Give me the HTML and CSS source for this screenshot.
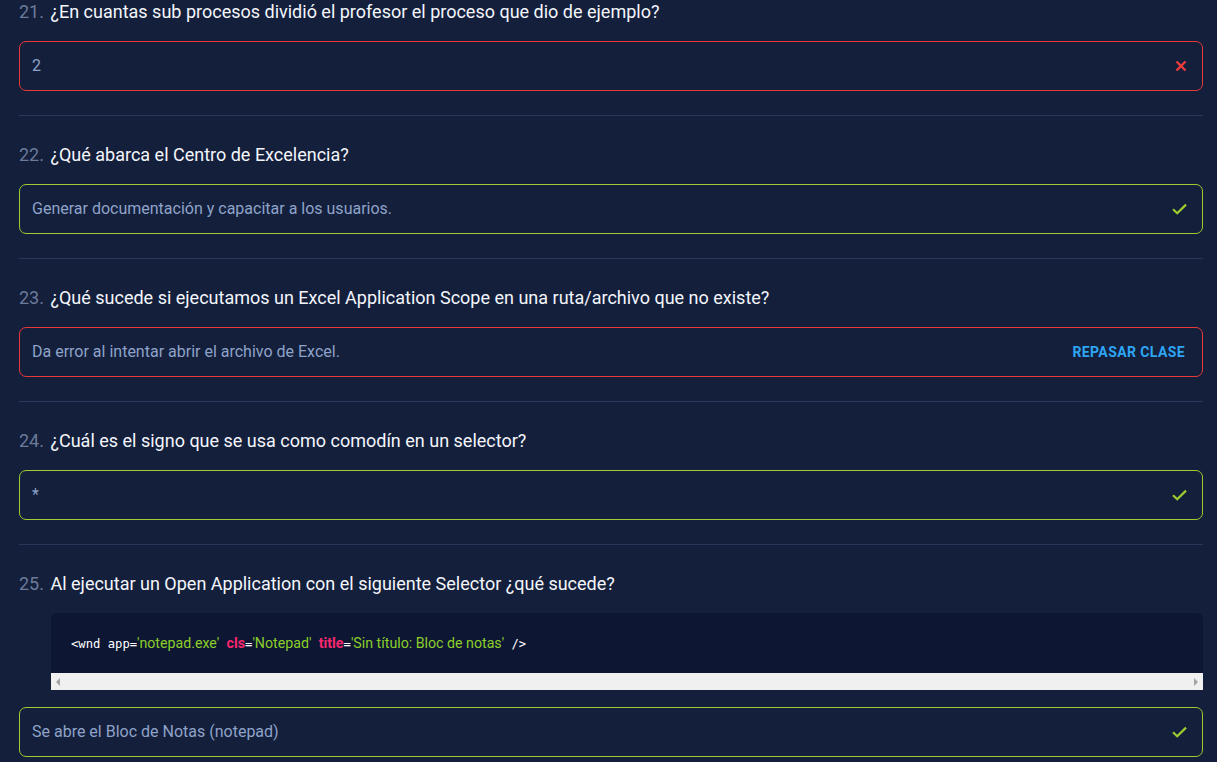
FILE: index.html
```html
<!DOCTYPE html>
<html lang="es">
<head>
<meta charset="utf-8">
<link rel="stylesheet" href="styles.css">
</head>
<body>
<main class="quiz">
  <section class="q">
    <h3 class="q-title"><span class="num">21.</span> ¿En cuantas sub procesos dividió el profesor el proceso que dio de ejemplo?</h3>
    <div class="answer wrong"><span class="txt">2</span>
      <svg class="ic x" width="12" height="12" viewBox="0 0 12 12"><path d="M1.5 1.5L10.5 10.5M10.5 1.5L1.5 10.5" stroke="#ef3b3b" stroke-width="2.4"/></svg>
    </div>
  </section>
  <section class="q">
    <h3 class="q-title"><span class="num">22.</span> ¿Qué abarca el Centro de Excelencia?</h3>
    <div class="answer right"><span class="txt">Generar documentación y capacitar a los usuarios.</span>
      <svg class="ic" width="15" height="12" viewBox="0 0 15 12"><path d="M1 6.2L5.2 10.3L14 1.6" fill="none" stroke="#9ccc2e" stroke-width="2.2"/></svg>
    </div>
  </section>
  <section class="q">
    <h3 class="q-title"><span class="num">23.</span> ¿Qué sucede si ejecutamos un Excel Application Scope en una ruta/archivo que no existe?</h3>
    <div class="answer wrong"><span class="txt">Da error al intentar abrir el archivo de Excel.</span>
      <span class="review">REPASAR CLASE</span>
    </div>
  </section>
  <section class="q">
    <h3 class="q-title"><span class="num">24.</span> ¿Cuál es el signo que se usa como comodín en un selector?</h3>
    <div class="answer right"><span class="txt">*</span>
      <svg class="ic" width="15" height="12" viewBox="0 0 15 12"><path d="M1 6.2L5.2 10.3L14 1.6" fill="none" stroke="#9ccc2e" stroke-width="2.2"/></svg>
    </div>
  </section>
  <section class="q last">
    <h3 class="q-title"><span class="num">25.</span> Al ejecutar un Open Application con el siguiente Selector ¿qué sucede?</h3>
    <div class="code">
      <div class="code-body"><code class="line"><span class="tag">&lt;wnd</span> <span class="attr">app</span>=<span class="str">'notepad.exe'</span> <span class="key">cls</span>=<span class="str">'Notepad'</span> <span class="key">title</span>=<span class="str">'Sin título: Bloc de notas'</span> <span class="tag">/&gt;</span></code></div>
      <div class="scrollbar"><span class="arr left"></span><span class="arr right"></span></div>
    </div>
    <div class="answer right"><span class="txt">Se abre el Bloc de Notas (notepad)</span>
      <svg class="ic" width="15" height="12" viewBox="0 0 15 12"><path d="M1 6.2L5.2 10.3L14 1.6" fill="none" stroke="#9ccc2e" stroke-width="2.2"/></svg>
    </div>
  </section>
</main>
</body>
</html>
```
FILE: styles.css
```css
* { box-sizing: border-box; }
html, body { margin: 0; padding: 0; }
body {
  background: #131f3b;
  font-family: Roboto, "Liberation Sans", Arial, sans-serif;
  overflow: hidden;
}
.quiz {
  padding: 0 14px 0 19px;
  margin-top: -1px;
}
.q {
  border-bottom: 1px solid #27375a;
  padding-bottom: 24px;
  margin-bottom: 26px;
}
.q.last { border-bottom: none; }
.q-title {
  margin: 0;
  font-weight: 400;
  font-size: 18px;
  line-height: 25px;
  color: #f4f6fb;
}
.num { color: #6c7b9a; margin-right: 2px; }
.answer {
  margin-top: 17px;
  height: 50px;
  border: 1px solid;
  border-radius: 7px;
  display: flex;
  align-items: center;
  justify-content: space-between;
  padding: 0 15px 0 12px;
  color: #8fa3c9;
  font-size: 16px;
}
.answer .txt { position: relative; top: -1px; }
.answer.wrong { border-color: #e8383a; }
.answer.right { border-color: #9ccc2e; }
.review {
  color: #2ea5f4;
  font-weight: 700;
  font-size: 14px;
  letter-spacing: 0.4px;
  margin-right: 2px;
}
.code {
  margin: 17px 0 17px 32px;
  border-radius: 6px 6px 0 0;
  overflow: hidden;
  background: #0d1633;
}
.code-body {
  height: 60px;
  padding: 0 20px;
  display: flex;
  align-items: center;
}
.line {
  white-space: pre;
  font-family: "DejaVu Sans Mono", monospace;
  font-size: 12.2px;
  color: #ffffff;
}
.str, .key { font-family: Roboto, "Liberation Sans", sans-serif; font-size: 14.2px; }
.str { color: #8ccf2a; }
.key { color: #f7266e; font-weight: 700; }
.scrollbar {
  height: 17px;
  background: #f0f0f0;
  position: relative;
}
.arr {
  position: absolute;
  top: 5px;
  width: 0; height: 0;
  border-top: 4px solid transparent;
  border-bottom: 4px solid transparent;
}
.arr.left { left: 5px; border-right: 4px solid #a3a3a3; }
.arr.right { right: 5px; border-left: 4px solid #a3a3a3; }
```
